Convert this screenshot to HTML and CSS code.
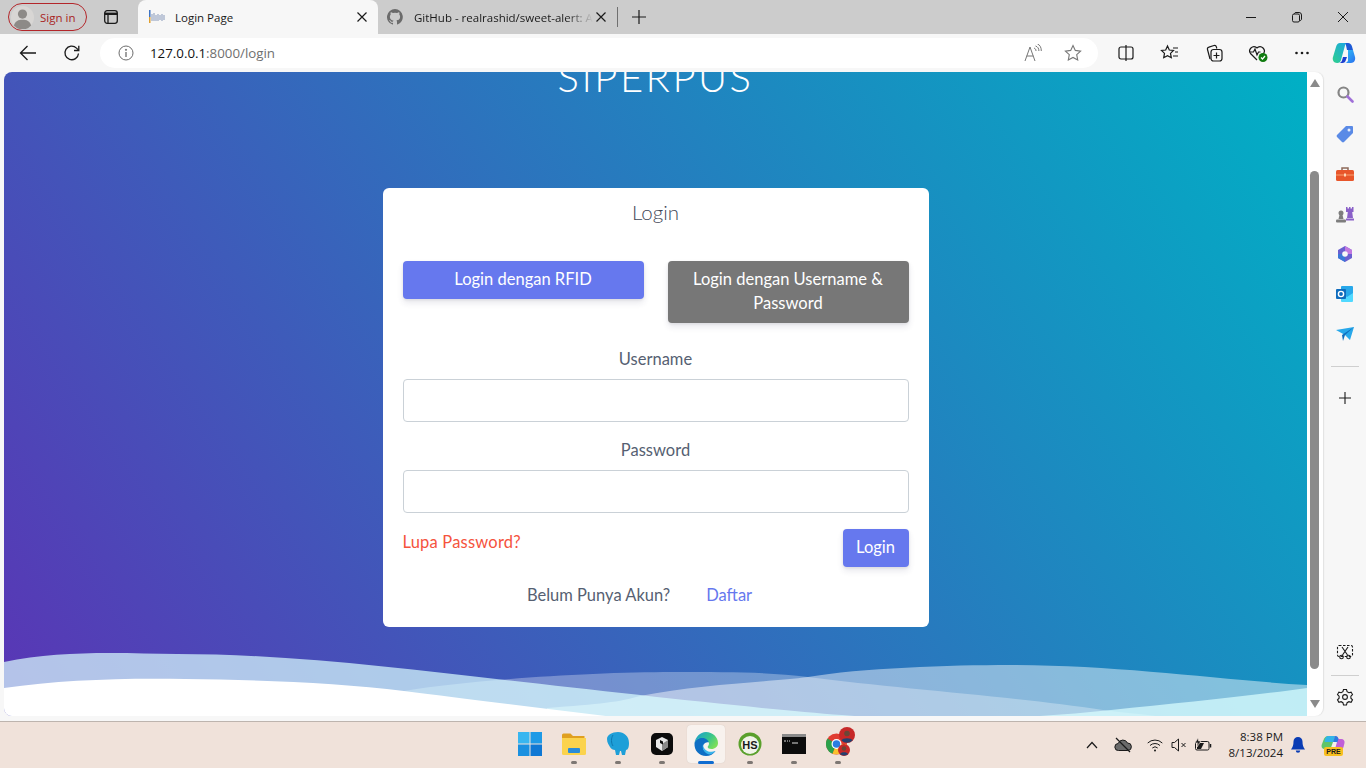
FILE: index.html
```html
<!DOCTYPE html>
<html lang="en">
<head>
    <meta charset="UTF-8">
    <meta name="viewport" content="width=device-width, initial-scale=1.0">
    <title>Login Page</title>
    <link rel="stylesheet" href="styles.css">
</head>
<body>
    <!-- tab strip -->
    <div class="tabstrip">
        <div class="signin">
            <svg class="avatar" viewBox="0 0 20 20"><circle cx="10" cy="10" r="10" fill="#d8d6d4"/><circle cx="10" cy="7" r="4" fill="#8d8a87"/><path d="M2.500 17c1-4 4-5 7.500-5s6.500 1 7.500 5a10 10 0 0 1-15 0z" fill="#8d8a87"/></svg>
            <span>Sign in</span>
        </div>
        <div class="tab-actions">
            <svg width="16" height="16" viewBox="0 0 16 16" fill="none" stroke="#1a1a1a" stroke-width="1.300"><rect x="1.700" y="1.700" width="12.600" height="12.600" rx="2.500"/><path d="M1.700 4.800h12.600" stroke-width="2.400"/><path d="M5 4.800v9.500"/></svg>
        </div>
        <div class="tab active">
            <svg class="favicon" viewBox="0 0 18 18"><rect x="1" y="2" width="1.500" height="7" fill="#3f74c4"/><rect x="1" y="9" width="1.500" height="6" fill="#e0a030"/><path d="M4 6v7M6 5v8M8 7v6M10 6v7M12 7v5M14 6v7M16 7v5" stroke="#9aa8c4" stroke-width="1.200"/></svg>
            <span class="tab-title">Login Page</span>
            <svg class="tab-close" viewBox="0 0 16 16" stroke="#1a1a1a" stroke-width="1.200"><path d="M3.500 3.500l9 9M12.500 3.500l-9 9"/></svg>
        </div>
        <div class="tab second">
            <svg class="favicon-small" viewBox="0 0 16 16"><path fill="#6b6b6b" d="M8 0a8 8 0 0 0-2.500 15.600c.4.1.5-.2.5-.4v-1.400c-2.200.5-2.700-1-2.700-1-.4-.9-.9-1.200-.9-1.200-.7-.5.100-.5.100-.5.800.1 1.200.8 1.200.8.700 1.200 1.900.9 2.300.7.100-.5.300-.9.500-1.100-1.800-.2-3.600-.9-3.600-4 0-.9.300-1.600.8-2.100-.1-.2-.4-1 .1-2.100 0 0 .7-.2 2.200.8a7.600 7.600 0 0 1 4 0c1.500-1 2.200-.8 2.200-.8.400 1.100.2 1.900.1 2.100.5.600.8 1.300.8 2.100 0 3.100-1.900 3.700-3.700 3.900.3.300.6.800.6 1.500v2.200c0 .2.100.5.600.4A8 8 0 0 0 8 0z"/></svg>
            <span class="tab-title fade">GitHub - realrashid/sweet-alert: A</span>
            <svg class="tab-close" viewBox="0 0 16 16" stroke="#1a1a1a" stroke-width="1.200"><path d="M3.500 3.500l9 9M12.500 3.500l-9 9"/></svg>
        </div>
        <div class="tab-sep"></div>
        <div class="new-tab">
            <svg width="16" height="16" viewBox="0 0 16 16" stroke="#1a1a1a" stroke-width="1.200"><path d="M8 1v14M1 8h14"/></svg>
        </div>
        <div class="spacer"></div>
        <div class="win-btn"><svg width="12" height="12" viewBox="0 0 12 12" stroke="#1a1a1a"><path d="M1 6.500h10"/></svg></div>
        <div class="win-btn"><svg width="12" height="12" viewBox="0 0 12 12" fill="none" stroke="#1a1a1a"><rect x="1.500" y="3" width="7" height="8" rx="1.500"/><path d="M3.500 3V2.500a1.500 1.500 0 0 1 1.500-1h3a2.500 2.500 0 0 1 2.500 2.500v4a1.500 1.500 0 0 1-2 1.500"/></svg></div>
        <div class="win-btn"><svg width="12" height="12" viewBox="0 0 12 12" stroke="#1a1a1a"><path d="M1 1l10 10M11 1L1 11"/></svg></div>
    </div>

    <!-- address bar -->
    <div class="toolbar">
        <div class="tool-btn"><svg width="18" height="18" viewBox="0 0 18 18" fill="none" stroke="#1a1a1a" stroke-width="1.300"><path d="M17 9H1.500M8.500 2L1.500 9l7 7"/></svg></div>
        <div class="tool-btn"><svg width="18" height="18" viewBox="0 0 18 18" fill="none" stroke="#1a1a1a" stroke-width="1.300"><path d="M15.500 9.500a6.800 6.800 0 1 1-2-5.400l2 2"/><path d="M15.800 1.700v4.800h-4.800"/></svg></div>
        <div class="omnibox">
            <svg class="info-icon" width="16" height="16" viewBox="0 0 16 16" fill="none" stroke="#6d6d6d"><circle cx="8" cy="8" r="7"/><path d="M8 7v5" stroke-width="1.300"/><circle cx="8" cy="4.800" r=".6" fill="#6d6d6d"/></svg>
            <span class="url"><span class="url-host">127.0.0.1</span>:8000/login</span>
            <div class="spacer"></div>
            <div class="omni-btn"><svg width="20" height="18" viewBox="0 0 20 18" fill="none" stroke="#777"><path d="M2 17L7 3l5 14M3.700 12h6.600"/><path d="M11 4c1.300.5 2 1.500 2 3M12.500 2c2.300.7 3.400 2.500 3.400 5M14.500 0c2.600 1 3.800 3.500 3.800 7"/></svg></div>
            <div class="omni-btn"><svg width="18" height="18" viewBox="0 0 18 18" fill="none" stroke="#777" stroke-width="1.100"><path d="M9 1.500l2.300 4.900 5.300.7-3.900 3.600 1 5.300L9 13.400 4.300 16l1-5.300L1.400 7.100l5.300-.7z"/></svg></div>
        </div>
        <div class="tool-group">
            <div class="tool-btn"><svg width="18" height="18" viewBox="0 0 18 18" fill="none" stroke="#1a1a1a" stroke-width="1.200"><rect x="2" y="3" width="14" height="12" rx="2"/><path d="M9 1v16"/></svg></div>
            <div class="tool-btn"><svg width="20" height="18" viewBox="0 0 20 18" fill="none" stroke="#1a1a1a" stroke-width="1.200"><path d="M7.500 2l1.800 4 4.200.5-3 2.900.8 4.300-3.800-2.100-3.800 2.100.8-4.300-3-2.900 4.200-.5z"/><path d="M13 4h5M15 8h3M13 12h5"/></svg></div>
            <div class="tool-btn"><svg width="20" height="20" viewBox="0 0 20 20" fill="none" stroke="#1a1a1a" stroke-width="1.200"><path d="M6 16L3.500 6.500a2 2 0 0 1 1.400-2.400L10 2.500a2 2 0 0 1 2.400 1.400l.4 1.600"/><rect x="7" y="6.500" width="11" height="11.500" rx="2.500"/><path d="M12.500 9.500v6M9.500 12.500h6"/></svg></div>
            <div class="tool-btn"><svg width="22" height="20" viewBox="0 0 22 20" fill="none" stroke="#1a1a1a" stroke-width="1.200"><path d="M10 17L3.500 10.500a4.300 4.300 0 0 1 6-6l.5.500.5-.5a4.300 4.300 0 0 1 6 6l-1 1"/><path d="M3 9h3.500l1.500-3 2 6 1.500-3h2"/><circle cx="16" cy="14.500" r="4.500" fill="#107c10" stroke="none"/><path d="M14 14.500l1.500 1.500 2.500-3" stroke="#fff"/></svg></div>
            <div class="tool-btn"><svg width="16" height="4" viewBox="0 0 16 4" fill="#1a1a1a"><circle cx="2.500" cy="2" r="1.300"/><circle cx="8" cy="2" r="1.300"/><circle cx="13.500" cy="2" r="1.300"/></svg></div>
            <div class="tool-btn copilot"><svg width="26" height="26" viewBox="0 0 26 26">
                <defs>
                    <linearGradient id="copLeft" x1="0" y1="1" x2="1" y2="0"><stop offset="0" stop-color="#2fd08c"/><stop offset="1" stop-color="#18a4e8"/></linearGradient>
                    <linearGradient id="copRight" x1="0" y1="0" x2="1" y2="1"><stop offset="0" stop-color="#2ec0f5"/><stop offset="1" stop-color="#2a6ff0"/></linearGradient>
                </defs>
                <path d="M9 3h8c-1.500 0-2.400.8-3 2.500L10 20c-.5 2-2 3-3.500 3H6c-3 0-5-3-4-6l3-10c.7-2.500 2-4 4-4z" fill="url(#copLeft)"/>
                <path d="M14.500 3H17c2 0 3.400 1.300 4 3.500L22 10h-6z" fill="#1c5ad6"/>
                <path d="M17 10h5l2 7c.8 3-1 6-4 6h-6c1.500 0 2.400-1 3-2.500z" fill="url(#copRight)"/>
                <path d="M12 17h4l-1.500 4c-.5 1.300-1.500 2-3 2H8c1.500 0 2.500-1 3-2.500z" fill="#1c3fd0"/>
            </svg></div>
        </div>
    </div>

    <div class="window-body">
        <main class="page">
            <h1 class="brand">SIPERPUS</h1>
            <div class="card">
                <h2 class="card-title">Login</h2>
                <div class="mode-row">
                    <button class="btn btn-primary">Login dengan RFID</button>
                    <button class="btn btn-gray">Login dengan Username &amp; Password</button>
                </div>
                <label class="field-label">Username</label>
                <input class="field-input" type="text">
                <label class="field-label">Password</label>
                <input class="field-input" type="password">
                <div class="submit-row">
                    <a class="forgot">Lupa Password?</a>
                    <button class="btn btn-primary btn-small">Login</button>
                </div>
                <div class="register-row">
                    <span>Belum Punya Akun?</span>
                    <a class="register-link">Daftar</a>
                </div>
            </div>
            <svg class="waves" viewBox="4 640 1303 76" preserveAspectRatio="none">
                <path fill="#fff" fill-opacity=".3" d="M404 691C470 680 590 672 673 672C730 672 770 672 808 677C900 689 1020 697 1103 710C1125 713 1145 714 1162 717H404Z"/>
                <path fill="#fff" fill-opacity=".46" d="M547 708C600 704 620 702 640 696C700 684 770 682 808 677C860 668 950 665 1010 665C1120 665 1220 680 1307 685V717H547Z"/>
                <path fill="#dcffff" fill-opacity=".7" d="M4 662C60 650 120 653 177 654C285 654 400 668 505 680C620 693 760 709 842 715C900 720 1000 722 1111 710C1180 703 1250 696 1307 688V717H4Z"/>
                <path fill="#fff" d="M4 688C60 680 120 678 185 679C260 680 340 683 404 691C460 698 540 708 614 717H4Z"/>
            </svg>
        </main>
        <div class="scrollbar">
            <div class="arrow-up"></div>
            <div class="thumb"></div>
            <div class="arrow-down"></div>
        </div>
        <aside class="sidebar">
            <div class="side-btn"><svg width="18" height="18" viewBox="0 0 18 18" fill="none"><circle cx="7.500" cy="7.500" r="5" stroke="#858585" stroke-width="2.200"/><path d="M11.500 11.500l5 5" stroke="#a070d8" stroke-width="2.600" stroke-linecap="round"/></svg></div>
            <div class="side-btn"><svg width="18" height="18" viewBox="0 0 18 18"><path d="M10 1h6a1 1 0 0 1 1 1v6L8 17a1.500 1.500 0 0 1-2 0l-5-5a1.500 1.500 0 0 1 0-2z" fill="#5a8ae6"/><circle cx="13" cy="5" r="1.500" fill="#e8eefc"/></svg></div>
            <div class="side-btn"><svg width="18" height="16" viewBox="0 0 18 16"><path d="M6 4V2h6v2" fill="none" stroke="#8d6a5a" stroke-width="1.500"/><rect y="4" width="18" height="11" rx="1.500" fill="#e8562a"/><rect y="8.500" width="18" height="1" fill="#f8a070"/><rect x="8" y="7.500" width="2" height="3" fill="#ffd7b8"/></svg></div>
            <div class="side-btn"><svg width="20" height="20" viewBox="0 0 20 20"><path d="M11 3h1.500v1.500H14V3h1.500v1.500H17V3h1.500v5h-1.300l.8 6H12l.8-6h-1.800z" fill="#8a60c8"/><rect x="11" y="14.500" width="8" height="2" fill="#8a60c8"/><circle cx="6" cy="9" r="2.500" fill="#7d7d7d"/><path d="M4.500 11h3l1 4h-5z" fill="#7d7d7d"/><rect x="1" y="15.500" width="10" height="3" rx="1" fill="#7d7d7d"/></svg></div>
            <div class="side-btn"><svg width="18" height="18" viewBox="0 0 18 18"><path d="M9 1l7 4v8l-7 4-7-4V5z" fill="#6a5fd0"/><path d="M9 1l7 4v4h-5a3 3 0 0 0-2-2.800z" fill="#c278e0"/><path d="M2 9h5a3 3 0 0 0 2 2.800V17l-7-4z" fill="#3a78d8"/><circle cx="9" cy="9" r="2.800" fill="#f7f7f7"/></svg></div>
            <div class="side-btn"><svg width="18" height="18" viewBox="0 0 18 18"><rect x="5" y="1" width="12" height="15" rx="1" fill="#28a8ea"/><path d="M5 8l6 4 6-4v8a1 1 0 0 1-1 1H6a1 1 0 0 1-1-1z" fill="#50d9ff"/><rect y="4" width="10" height="10" rx="1" fill="#0f6cbd"/><circle cx="5" cy="9" r="2.600" fill="none" stroke="#fff" stroke-width="1.400"/></svg></div>
            <div class="side-btn"><svg width="18" height="16" viewBox="0 0 18 16"><path d="M0 4l18-3-4 13-5-5z" fill="#28a8ea"/><path d="M18 1L6 9l1 6 2-6z" fill="#0f6cbd"/></svg></div>
            <div class="side-line"></div>
            <div class="side-btn"><svg width="14" height="14" viewBox="0 0 14 14" stroke="#1a1a1a" stroke-width="1.100"><path d="M7 1v12M1 7h12"/></svg></div>
            <div class="spacer"></div>
            <div class="side-btn"><svg width="18" height="18" viewBox="0 0 18 18" fill="none" stroke="#1a1a1a" stroke-width="1.100"><rect x="1.500" y="2.500" width="15" height="11" rx="1.500" stroke-dasharray="2.500 1.500"/><path d="M6 4l5.500 8M12 4l-5.500 8"/><circle cx="5.500" cy="14" r="1.800"/><circle cx="12.500" cy="14" r="1.800"/></svg></div>
            <div class="side-line"></div>
            <div class="side-btn"><svg width="18" height="18" viewBox="0 0 18 18" fill="none" stroke="#1a1a1a" stroke-width="1.100"><path d="M7.500 1.500h3l.6 2.200 1.800 1 2.200-.6 1.400 2.500-1.600 1.600v2l1.600 1.600-1.400 2.500-2.200-.6-1.800 1-.6 2.300h-3l-.6-2.300-1.800-1-2.200.6L1.500 11.800l1.600-1.600v-2L1.500 6.600l1.400-2.500 2.200.6 1.800-1z"/><circle cx="9" cy="9" r="2.400"/></svg></div>
        </aside>
    </div>
    <div class="window-foot"></div>

    <!-- windows taskbar -->
    <footer class="taskbar">
        <div class="task-icons">
            <div class="task-item"><svg width="24" height="24" viewBox="0 0 24 24"><rect width="11.500" height="11.500" fill="#38b6f0"/><rect x="12.500" width="11.500" height="11.500" fill="#1e9ae6"/><rect y="12.500" width="11.500" height="11.500" fill="#1a90e0"/><rect x="12.500" y="12.500" width="11.500" height="11.500" fill="#0f78d4"/></svg></div>
            <div class="task-item running"><svg width="24" height="22" viewBox="0 0 24 22"><path d="M0 2a1.500 1.500 0 0 1 1.500-1.500h7L11 3h11.500V8H0z" fill="#e0a020"/><path d="M0 5h24v15.500a1.500 1.500 0 0 1-1.500 1.500h-21A1.500 1.500 0 0 1 0 20.500z" fill="#fbd34d"/><rect x="6" y="15" width="12" height="5" rx="1" fill="#2a8cd8"/></svg></div>
            <div class="task-item running"><svg width="24" height="26" viewBox="0 0 24 26"><path d="M12 1c6 0 11 4 11 11 0 4-1 7-3 7l-1 5h-3l-1-4h-1l-1 4h-3l-1-5c-2 0-4-1-5-3s-3-4-3-8C1 4 6 1 12 1z" fill="#1e9fd8"/><path d="M7 4c-2 3-2 8 0 11" stroke="#0e78b0" fill="none"/></svg></div>
            <div class="task-item running"><svg width="22" height="22" viewBox="0 0 22 22"><rect width="22" height="22" rx="5" fill="#0c0c0c"/><path d="M11 4l6 3v7l-6 4-6-4V7z" fill="#e8e8e8"/><path d="M11 11l6-4v7l-6 4z" fill="#888"/><path d="M9 7l3 1.500v3L9 10z" fill="#0c0c0c"/></svg></div>
            <div class="task-item active"><svg width="26" height="26" viewBox="0 0 26 26">
                <defs><linearGradient id="edgeTop" x1="0" y1="0" x2="1" y2=".6"><stop offset="0" stop-color="#1a9bd8"/><stop offset=".6" stop-color="#36c48e"/><stop offset="1" stop-color="#7ade5a"/></linearGradient></defs>
                <path d="M1.500 12C3 8 6 6.500 10 6.500c3.500 0 6.500 2 6.500 5-2-.7-6.500.5-6.500 4.500 0 5 6 7.500 12.500 4-2 3-5.500 5-9.500 5C6 25 1 19.500 1.500 12z" fill="#0f6fc4"/>
                <path d="M10 13.500c-1.500 5 2.500 9.500 7 10 2-.6 4-1.800 5.500-3.500-5 2-12 .5-12.500-6.500z" fill="#39b4ea"/>
                <path d="M13 1c6.500 0 12 5 12 11 0 3.500-3 6-6.500 6-2.500 0-3.800-1-3.800-2 0-1 1.300-1.500 1.300-3.500 0-3-3-5.500-6.500-5.500-4 0-7 2-8 5C2.500 6 7 1 13 1z" fill="url(#edgeTop)"/>
            </svg><span class="run-bar"></span></div>
            <div class="task-item running"><svg width="24" height="24" viewBox="0 0 24 24"><circle cx="12" cy="12" r="11.500" fill="#5aa02c"/><circle cx="12" cy="13" r="9" fill="#f0f4e8"/><text class="hs-text" x="12" y="17">HS</text></svg></div>
            <div class="task-item running"><svg width="24" height="20" viewBox="0 0 24 20"><rect width="24" height="20" fill="#0c0c0c"/><rect width="24" height="3" fill="#8a8a8a"/><path d="M2 7h2M5 7h1M7 7h1M10 9h6" stroke="#ddd"/></svg></div>
            <div class="task-item running"><svg width="36" height="38" viewBox="0 0 36 38"><circle cx="16.500" cy="19" r="10.500" fill="#e03c31"/><path d="M16.500 19L7.500 13.500a10.500 10.500 0 0 0 5 15.200z" fill="#2ba14b"/><path d="M16.500 19l-4 9.700a10.500 10.500 0 0 0 14-9.700z" fill="#fbc02d"/><circle cx="16.500" cy="19" r="5" fill="#fff"/><circle cx="16.500" cy="19" r="3.800" fill="#2a7de1"/><circle cx="27" cy="10" r="8" fill="#c62828"/><circle cx="27" cy="8.500" r="2.800" fill="#6a4636"/><path d="M21.500 15.500c1-3 10-3 11 0a8 8 0 0 1-11 0z" fill="#24406e"/><circle cx="24" cy="25" r="6" fill="#c62828"/><circle cx="24" cy="23.500" r="2.300" fill="#6a4636"/><path d="M20 29c1-2.500 7-2.500 8 0a6 6 0 0 1-8 0z" fill="#24406e"/></svg></div>
        </div>
        <div class="tray">
            <div class="tray-icon chevron"><svg width="12" height="8" viewBox="0 0 12 8" fill="none" stroke="#1a1a1a" stroke-width="1.200"><path d="M1 7l5-5.500L11 7"/></svg></div>
            <div class="tray-icon cloud"><svg width="18" height="16" viewBox="0 0 18 16" stroke="#1a1a1a"><path d="M4.500 13.500a3.500 3.500 0 0 1-.3-7A5 5 0 0 1 13.500 6a3.700 3.700 0 0 1 .3 7.500z" fill="#6a6a6a"/><path d="M2 1l14 14" stroke-width="1.300"/></svg></div>
            <div class="tray-icon wifi"><svg width="16" height="14" viewBox="0 0 16 14" fill="none" stroke="#1a1a1a"><path d="M.7 5a10.500 10.500 0 0 1 14.600 0M3 7.500a7.300 7.300 0 0 1 10 0M5.300 10a4 4 0 0 1 5.400 0"/><circle cx="8" cy="12.500" r="1" fill="#1a1a1a" stroke="none"/></svg></div>
            <div class="tray-icon mute"><svg width="16" height="14" viewBox="0 0 16 14" fill="none" stroke="#1a1a1a"><path d="M1 4.500h2.500L7.500 1v12L3.500 9.500H1z"/><path d="M10.500 5l4 4M14.500 5l-4 4"/></svg></div>
            <div class="tray-icon battery"><svg width="18" height="14" viewBox="0 0 18 14" fill="none" stroke="#1a1a1a"><rect x="1.500" y="3.500" width="13.500" height="8.500" rx="1.500"/><path d="M16.500 6v3.500" stroke-width="1.500"/><path d="M3 5h7l-3 6H3z" fill="#1a1a1a" stroke="none"/><path d="M4 0L1 5h3l-1 4 4-6H4.500z" fill="#1a1a1a" stroke="#f0e2da" stroke-width=".6"/></svg></div>
            <div class="clock">
                <span>8:38 PM</span>
                <span>8/13/2024</span>
            </div>
            <div class="tray-icon bell"><svg width="14" height="16" viewBox="0 0 14 16" fill="#0a3cb4"><path d="M7 0a4.500 4.500 0 0 1 4.500 4.500c0 4 .8 5.500 2.500 8H0c1.700-2.500 2.500-4 2.500-8A4.500 4.500 0 0 1 7 0z"/><path d="M4.800 13.500h4.400a2.200 2.200 0 0 1-4.400 0z"/></svg></div>
            <div class="tray-icon copilot-pre">
                <svg width="24" height="20" viewBox="0 0 24 20"><path d="M7 1h7l-3 13H4C1 14 0 12 .8 9.500L2.500 5C3.500 2.500 5 1 7 1z" fill="#5fc46a"/><path d="M7 1h7l-1.500 6H3.500C4 3 5 1 7 1z" fill="#32b4e8"/><path d="M14 1c2 0 3 1 3.500 3h3c2 0 3.500 2 3 4l-1 4c-.5 2-2 3-4 3H11z" fill="#c060d8"/><path d="M14 1c2 0 3 1 3.500 3L16 8h-4z" fill="#2a7de0"/><path d="M12 7h4l-2 7H9.500z" fill="#f5f0ee"/></svg>
                <span class="pre-badge">PRE</span>
            </div>
        </div>
    </footer>
</body>
</html>
```

FILE: styles.css
```css
* {
    box-sizing: border-box;
}
body {
    margin: 0;
    height: 100vh;
    display: flex;
    flex-direction: column;
    overflow: hidden;
    background-color: #f7f7f7;
    font-family: "Open Sans", sans-serif;
    font-size: 11.500px;
    color: #1a1a1a;
}
svg {
    display: block;
    flex-shrink: 0;
}
.spacer {
    flex: 1;
}

/* tab strip */
.tabstrip {
    height: 34px;
    display: flex;
    align-items: center;
    padding-left: 8px;
    background-color: #cccccc;
}
.signin {
    width: 79px;
    height: 28px;
    display: flex;
    align-items: center;
    gap: 6px;
    padding-left: 2px;
    border: 1px solid #b3262a;
    border-radius: 14px;
    color: #a81f24;
}
.avatar {
    width: 23px;
    height: 23px;
}
.tab-actions {
    width: 48px;
    display: flex;
    justify-content: center;
}
.tab {
    height: 34px;
    display: flex;
    align-items: center;
}
.tab.active {
    width: 240px;
    margin-left: 3px;
    padding: 0 8px 0 10px;
    background-color: #f7f7f7;
    border-radius: 8px 8px 0 0;
}
.tab.second {
    width: 239px;
    padding: 0 8px 0 9px;
}
.favicon {
    width: 18px;
    height: 18px;
    margin-right: 9px;
}
.favicon-small {
    width: 16px;
    height: 16px;
    margin-right: 11px;
}
.tab-title {
    flex: 1;
    white-space: nowrap;
    overflow: hidden;
}
.tab-title.fade {
    -webkit-mask-image: linear-gradient(to right, #000 85%, transparent);
    mask-image: linear-gradient(to right, #000 85%, transparent);
}
.tab-close {
    width: 16px;
    height: 16px;
}
.tab-sep {
    width: 1px;
    height: 20px;
    background-color: #707070;
}
.new-tab {
    width: 42px;
    display: flex;
    justify-content: center;
}
.win-btn {
    width: 46px;
    display: flex;
    justify-content: center;
}

/* address bar */
.toolbar {
    height: 38px;
    display: flex;
    align-items: center;
    padding-left: 6px;
    background-color: #f7f7f7;
}
.tool-btn {
    width: 44px;
    height: 30px;
    display: flex;
    align-items: center;
    justify-content: center;
}
.tool-btn.copilot {
    width: 40px;
}
.omnibox {
    width: 998px;
    height: 30px;
    margin-left: 6px;
    display: flex;
    align-items: center;
    padding: 0 5px 0 18px;
    background-color: #fff;
    border-radius: 15px;
}
.info-icon {
    margin-right: 16px;
}
.url {
    font-size: 13.300px;
    color: #6f6f6f;
}
.url-host {
    color: #111;
}
.omni-btn {
    width: 40px;
    display: flex;
    justify-content: center;
}
.tool-group {
    display: flex;
    margin-left: 6px;
}

/* page area */
.window-body {
    height: 644px;
    display: flex;
    padding-left: 4px;
}
.page {
    position: relative;
    width: 1303px;
    display: flex;
    flex-direction: column;
    align-items: center;
    overflow: hidden;
    border-radius: 8px 0 0 8px;
    background: linear-gradient(55deg, #5a35b5, #00b0c5);
    font-family: Lato, sans-serif;
    font-size: 16.500px;
    color: #565f72;
}
.brand {
    margin: -20px 0 0;
    font-size: 40px;
    font-weight: 300;
    line-height: 50px;
    letter-spacing: 2.500px;
    color: #fff;
}
.card {
    position: relative;
    z-index: 1;
    width: 546px;
    margin-top: 86px;
    padding: 10px 20px 20px;
    display: flex;
    flex-direction: column;
    background-color: #fff;
    border-radius: 6px;
}
.card-title {
    margin: 0 0 35px;
    font-size: 20.500px;
    font-weight: 300;
    line-height: 28px;
    text-align: center;
    color: #3f4757;
}
.mode-row {
    display: flex;
    align-items: flex-start;
    gap: 24px;
}
.btn {
    flex: 1;
    padding: 6px 16px 8px;
    border: none;
    border-radius: 4px;
    font-family: inherit;
    font-size: 16.500px;
    line-height: 24px;
    color: #fff;
    box-shadow: 0 4px 6px rgba(50, 50, 93, 0.11), 0 1px 3px rgba(0, 0, 0, 0.08);
}
.btn-primary {
    background-color: #6678ee;
}
.btn-gray {
    background-color: #777777;
}
.btn-small {
    flex: none;
    width: 66px;
    padding: 6px 0 8px;
}
.field-label {
    margin-top: 24px;
    line-height: 24px;
    text-align: center;
}
.field-input {
    height: 43px;
    margin-top: 8px;
    border: 1px solid #cad1d7;
    border-radius: 4px;
    background-color: #fff;
}
.field-input + .field-label {
    margin-top: 16px;
}
.submit-row {
    display: flex;
    justify-content: space-between;
    align-items: flex-start;
    margin-top: 16px;
}
.forgot {
    padding-top: 1px;
    line-height: 24px;
    letter-spacing: 0.200px;
    color: #f5533d;
}
.register-row {
    display: flex;
    justify-content: center;
    gap: 36px;
    margin-top: 16px;
    padding-right: 32px;
    line-height: 24px;
}
.register-link {
    color: #6678ee;
}
.waves {
    position: absolute;
    left: 0;
    bottom: 0;
    width: 100%;
    height: 76px;
}

/* scrollbar */
.scrollbar {
    width: 16px;
    display: flex;
    flex-direction: column;
    align-items: center;
    padding: 7px 1px 7px 0;
    background-color: #fff;
    border-radius: 0 8px 8px 0;
    box-shadow: 1px 0 1px #e2e2e2;
}
.arrow-up,
.arrow-down {
    width: 0;
    height: 0;
    border-left: 5px solid transparent;
    border-right: 5px solid transparent;
}
.arrow-up {
    border-bottom: 8px solid #8a8a8a;
}
.arrow-down {
    margin-top: 31px;
    border-top: 8px solid #8a8a8a;
}
.thumb {
    width: 9px;
    height: 498px;
    margin-top: 84px;
    background-color: #8a8a8a;
    border-radius: 5px;
}

/* right sidebar */
.sidebar {
    flex: 1;
    display: flex;
    flex-direction: column;
    align-items: center;
    padding-top: 2px;
    margin-bottom: -1px;
}
.side-btn {
    width: 42px;
    height: 40px;
    display: flex;
    align-items: center;
    justify-content: center;
}
.side-line {
    width: 28px;
    height: 1px;
    margin: 12px 0;
    background-color: #cfcfcf;
}
.sidebar .side-line + .side-btn {
    margin-top: -1px;
}
.sidebar .spacer + .side-btn + .side-line {
    margin: 3px 0 2px;
}
.window-foot {
    height: 5px;
}

/* windows taskbar */
.taskbar {
    position: relative;
    height: 47px;
    display: flex;
    align-items: center;
    justify-content: flex-end;
    background-color: #f0e2da;
    border-top: 1px solid #bdb4ae;
}
.task-icons {
    position: absolute;
    left: 511px;
    top: 3px;
    display: flex;
    gap: 6px;
}
.task-item {
    position: relative;
    width: 38px;
    height: 38px;
    display: flex;
    align-items: center;
    justify-content: center;
    border-radius: 4px;
}
.task-item.running::after {
    content: "";
    position: absolute;
    left: 16px;
    bottom: -1px;
    width: 6px;
    height: 3px;
    border-radius: 2px;
    background-color: #7d7773;
}
.task-item.active {
    background-color: #f8f2ee;
    box-shadow: 0 0 1px #cbc1ba;
}
.run-bar {
    position: absolute;
    left: 11px;
    bottom: -1px;
    width: 16px;
    height: 3px;
    border-radius: 2px;
    background-color: #0f6cd0;
}
.hs-text {
    font-family: "Liberation Sans", sans-serif;
    font-size: 11px;
    font-weight: 700;
    text-anchor: middle;
    fill: #1a1a1a;
}
.tray {
    display: flex;
    align-items: center;
    padding-right: 21px;
}
.tray-icon {
    display: flex;
    justify-content: center;
}
.chevron {
    width: 16px;
    margin-right: 14px;
}
.cloud {
    width: 18px;
    margin-right: 15px;
}
.wifi {
    width: 16px;
    margin-right: 8px;
}
.mute {
    width: 16px;
    margin-right: 7px;
}
.battery {
    width: 18px;
}
.clock {
    width: 71px;
    display: flex;
    flex-direction: column;
    align-items: flex-end;
    line-height: 16px;
    color: #1a1a1a;
}
.bell {
    width: 14px;
    margin-left: 8px;
    margin-right: 16px;
}
.copilot-pre {
    position: relative;
    width: 24px;
}
.pre-badge {
    position: absolute;
    left: 3px;
    top: 12px;
    width: 19px;
    height: 9px;
    border-radius: 2px;
    background-color: #f8c020;
    font-family: "Liberation Sans", sans-serif;
    font-size: 7px;
    font-weight: 700;
    line-height: 9px;
    text-align: center;
    color: #1a1a1a;
}
```
